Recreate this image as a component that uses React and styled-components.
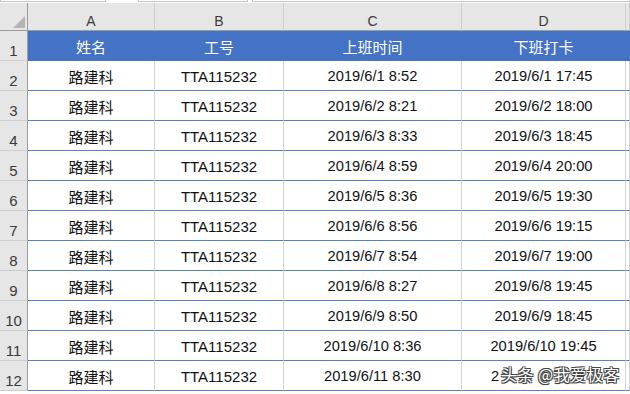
import React from "react";
import styled, { createGlobalStyle } from "styled-components";

const Global = createGlobalStyle`
  html, body {
    margin: 0;
    padding: 0;
    background: #ffffff;
    overflow: hidden;
  }
  body {
    font-family: "Liberation Sans", "Noto Sans CJK SC", sans-serif;
  }
`;

const COLS = "28px 127px 129px 178px 164px 1fr";

const Page = styled.div`
  position: relative;
  width: 630px;
  height: 394px;
  overflow: hidden;
  background: #fff;
`;

const TopStrip = styled.div`
  display: flex;
  height: 3px;
  gap: 4px;
  background: #fff;
`;

const StripBox = styled.div`
  width: ${(p) => p.$w || "auto"};
  flex: ${(p) => (p.$grow ? 1 : "none")};
  margin-left: ${(p) => p.$ml || "0"};
  border: 1px solid #c6c6c6;
  border-top: none;
  height: 1px;
`;

const Grid = styled.div`
  display: grid;
  grid-template-columns: ${COLS};
`;

const Corner = styled.div`
  position: relative;
  height: 28px;
  box-sizing: border-box;
  background: #e6e6e6;
  border-right: 1px solid #9d9d9d;
  border-bottom: 1px solid #9d9d9d;
  &::after {
    content: "";
    position: absolute;
    right: 2px;
    bottom: 2px;
    width: 0;
    height: 0;
    border-left: 12px solid transparent;
    border-bottom: 12px solid #b4b4b4;
  }
`;

const ColHead = styled.div`
  height: 28px;
  box-sizing: border-box;
  background: #e6e6e6;
  border-right: 1px solid #cfcfcf;
  border-bottom: 1px solid #9d9d9d;
  display: flex;
  align-items: flex-end;
  justify-content: center;
  padding-bottom: 1px;
  font-size: 14px;
  line-height: 16px;
  color: #3a3a3a;
`;

const RowHead = styled.div`
  height: 30px;
  box-sizing: border-box;
  background: #e6e6e6;
  border-right: 1px solid #9d9d9d;
  border-bottom: 1px solid #cdcdcd;
  display: flex;
  align-items: flex-end;
  justify-content: center;
  padding-bottom: 1px;
  font-size: 15px;
  line-height: 17px;
  color: #3a3a3a;
`;

const Cell = styled.div`
  height: 30px;
  box-sizing: border-box;
  background: ${(p) => (p.$head ? "#4472c4" : "#ffffff")};
  border-right: 1px solid ${(p) => (p.$head ? "#4472c4" : "#d4d4d4")};
  border-bottom: 1px solid ${(p) => (p.$head ? "#4472c4" : "#5a80c4")};
  color: ${(p) => (p.$head ? "#ffffff" : "#111111")};
  display: flex;
  align-items: center;
  justify-content: center;
  white-space: nowrap;
  overflow: hidden;
  font-size: ${(p) => (p.$date ? "14.7px" : "15px")};
  padding-top: 1px;
`;

const Watermark = styled.div`
  position: absolute;
  left: 499px;
  top: 364px;
  padding: 0 2px;
  background: rgba(255, 255, 255, 0.92);
  font-family: "Noto Sans CJK SC", sans-serif;
  font-size: 16px;
  line-height: 20px;
  color: #ffffff;
  letter-spacing: 0.5px;
  text-shadow: -1px -1px 0 #444, 1px -1px 0 #444, -1px 1px 0 #444,
    1px 1px 0 #444, 0 1px 1px #555;
`;

const header = ["姓名", "工号", "上班时间", "下班打卡"];

const rows = [
  ["2019/6/1 8:52", "2019/6/1 17:45"],
  ["2019/6/2 8:21", "2019/6/2 18:00"],
  ["2019/6/3 8:33", "2019/6/3 18:45"],
  ["2019/6/4 8:59", "2019/6/4 20:00"],
  ["2019/6/5 8:36", "2019/6/5 19:30"],
  ["2019/6/6 8:56", "2019/6/6 19:15"],
  ["2019/6/7 8:54", "2019/6/7 19:00"],
  ["2019/6/8 8:27", "2019/6/8 19:45"],
  ["2019/6/9 8:50", "2019/6/9 18:45"],
  ["2019/6/10 8:36", "2019/6/10 19:45"],
  ["2019/6/11 8:30", "2019/6/11 19:00"],
];

export default function App() {
  return (
    <Page>
      <Global />
      <TopStrip>
        <StripBox $w="104px" />
        <StripBox $w="108px" $ml="28px" />
        <StripBox $grow />
      </TopStrip>
      <Grid>
        <Corner />
        {["A", "B", "C", "D", ""].map((l, i) => (
          <ColHead key={i}>{l}</ColHead>
        ))}

        <RowHead>1</RowHead>
        {header.map((h) => (
          <Cell key={h} $head>
            {h}
          </Cell>
        ))}
        <Cell $head />

        {rows.map(([start, end], i) => (
          <React.Fragment key={i}>
            <RowHead>{i + 2}</RowHead>
            <Cell>路建科</Cell>
            <Cell>TTA115232</Cell>
            <Cell $date>{start}</Cell>
            <Cell $date>{end}</Cell>
            <Cell />
          </React.Fragment>
        ))}
      </Grid>
      <Watermark>头条 @我爱极客</Watermark>
    </Page>
  );
}
